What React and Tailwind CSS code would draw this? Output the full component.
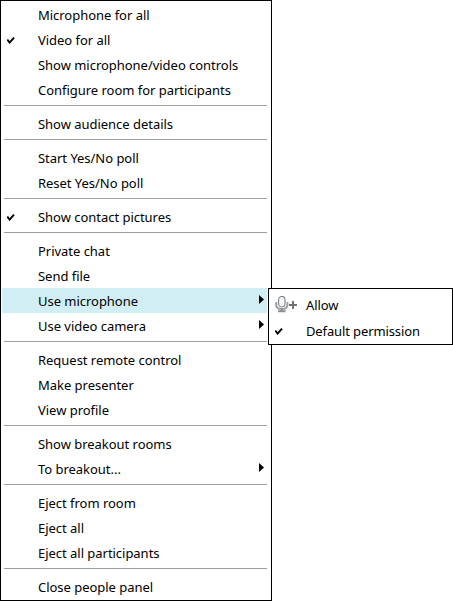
const groups = [
  [
    { label: "Microphone for all" },
    { label: "Video for all", checked: true },
    { label: "Show microphone/video controls" },
    { label: "Configure room for participants" },
  ],
  [{ label: "Show audience details" }],
  [{ label: "Start Yes/No poll" }, { label: "Reset Yes/No poll" }],
  [{ label: "Show contact pictures", checked: true }],
  [
    { label: "Private chat" },
    { label: "Send file" },
    { label: "Use microphone", submenu: true, active: true },
    { label: "Use video camera", submenu: true },
  ],
  [{ label: "Request remote control" }, { label: "Make presenter" }, { label: "View profile" }],
  [{ label: "Show breakout rooms" }, { label: "To breakout...", submenu: true }],
  [{ label: "Eject from room" }, { label: "Eject all" }, { label: "Eject all participants" }],
  [{ label: "Close people panel" }],
];

function Check() {
  return (
    <svg width="8" height="7" viewBox="0 0 8 7">
      <path d="M.3 2.6L2.6 5.6L7 .6" fill="none" stroke="#000" strokeWidth="1.9" />
    </svg>
  );
}

function Arrow() {
  return (
    <svg className="mb-1 shrink-0" width="5" height="9" viewBox="0 0 5 9">
      <path d="M0 0L5 4.5L0 9Z" fill="#000" />
    </svg>
  );
}

function MicPlus() {
  return (
    <svg className="mb-0.5" width="23" height="18" viewBox="0 0 23 18" fill="none">
      <path d="M1.2 6v3c0 2.6 2.3 4.1 5.6 4.1s5.6-1.5 5.6-4.1V6" stroke="#9a9fa3" strokeWidth="2" />
      <rect x="3.6" y=".5" width="6.4" height="10.5" rx="3.2" fill="#f6f8f9" stroke="#7f8488" strokeWidth="1.1" />
      <path d="M6.8 13v2M3 15.3h7.6" stroke="#8b9094" strokeWidth="2" />
      <path d="M18 5v8M14 9h8" stroke="#707276" strokeWidth="2" />
    </svg>
  );
}

function Item({ label, checked, submenu, active }) {
  return (
    <div className={`flex h-[25px] items-center pl-[5px] pr-[3px] pt-0.5 ${active ? "bg-[#d1eef4]" : ""}`}>
      <span className="w-[31px] shrink-0">{checked && <Check />}</span>
      <span className="grow whitespace-nowrap leading-[23px]">{label}</span>
      {submenu && <Arrow />}
    </div>
  );
}

export default function App() {
  return (
    <div className="relative h-[601px] w-[453px] overflow-hidden bg-white font-['Noto_Sans',sans-serif] text-[13px] tracking-[-0.03px] text-black">
      <div className="h-[601px] w-[272px] border border-black py-px pl-px pr-1">
        {groups.map((items, i) => (
          <div key={i}>
            {i > 0 && <div className="mb-[5px] ml-0.5 mt-[3px] h-px bg-[#a0a0a0]" />}
            {items.map((item) => (
              <Item key={item.label} {...item} />
            ))}
          </div>
        ))}
      </div>
      <div className="absolute left-[268px] top-[288px] h-[57px] w-[185px] border border-black bg-white pl-[6px] pt-[3px] tracking-[-0.12px]">
        <div className="flex h-[26px] items-center pt-0.5">
          <span className="w-[31px] shrink-0"><MicPlus /></span>
          <span>Allow</span>
        </div>
        <div className="flex h-[26px] items-center pt-0.5">
          <span className="w-[31px] shrink-0 pb-px"><Check /></span>
          <span className="whitespace-nowrap">Default permission</span>
        </div>
      </div>
    </div>
  );
}
